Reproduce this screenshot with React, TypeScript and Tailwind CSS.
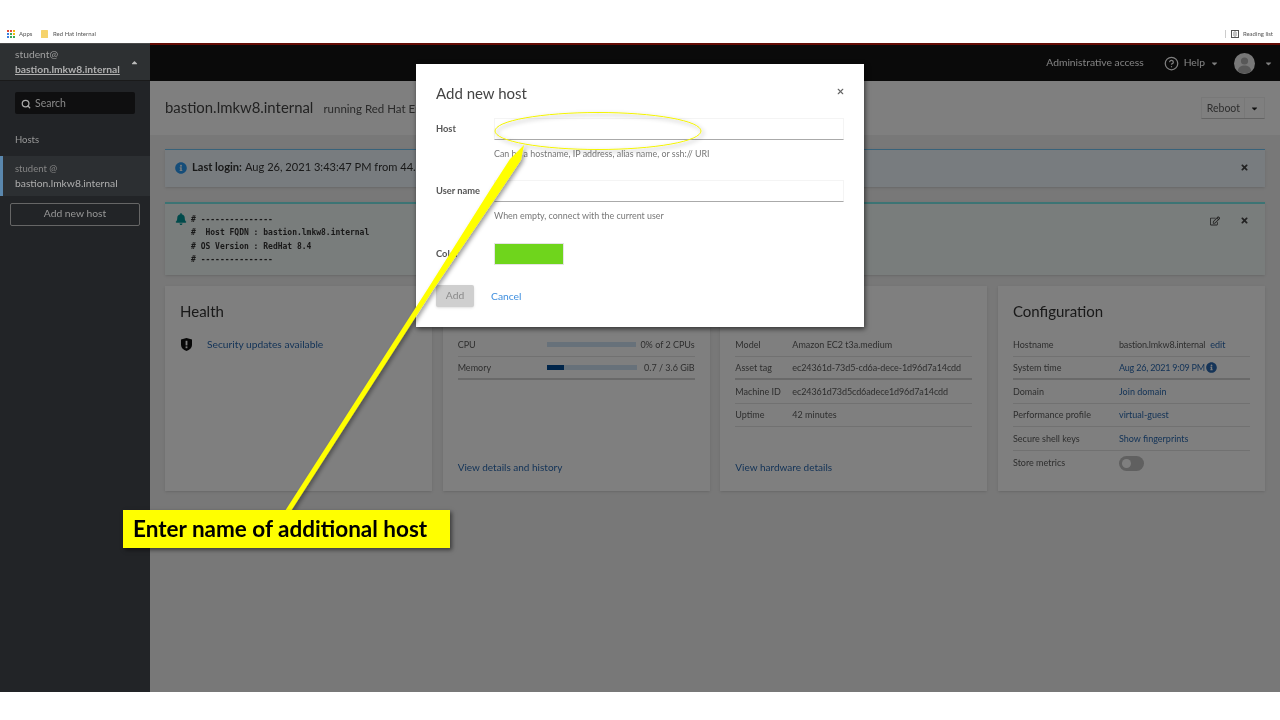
import React from 'react';
import { Search, X, CircleHelp } from 'lucide-react';
import { FaBell, FaInfoCircle, FaRegEdit, FaCaretDown, FaCaretUp, FaTimes } from 'react-icons/fa';

const Row: React.FC<{ label: string; labelW?: string; thick?: boolean; last?: boolean; children: React.ReactNode }> = ({ label, labelW = 'w-[57px]', thick, last, children }) => (
  <div className={`flex items-center h-[23.6px] ${last ? '' : thick ? 'border-b-2 border-[#d2d2d2]' : 'border-b border-[#e2e2e2]'}`}>
    <div className={`${labelW} shrink-0 text-[#5c5c5c]`}>{label}</div>
    <div className="flex-1 min-w-0 flex items-center whitespace-nowrap text-[#5c5c5c]">{children}</div>
  </div>
);

const Card: React.FC<{ title: string; footer?: string; children: React.ReactNode }> = ({ title, footer, children }) => (
  <div className="bg-white flex flex-col h-[205px] px-[15px] pt-[14px] pb-[16px] text-[9px] shadow-sm">
    <div className="text-[15px] leading-[22px] text-[#333] mb-[11px]">{title}</div>
    <div className="flex-1">{children}</div>
    {footer && <div className="text-[#2a69b0] text-[10px]">{footer}</div>}
  </div>
);

const Link: React.FC<{ children: React.ReactNode }> = ({ children }) => <span className="text-[#2a69b0]">{children}</span>;

export default function App() {
  return (
    <div className="relative w-[1280px] h-[720px] bg-white overflow-hidden blur-[0.35px] font-['Lato','Liberation_Sans',sans-serif]">
      {/* bookmarks bar */}
      <div className="h-[43px] flex items-end justify-between pb-[5px] pl-[7px] pr-[7px] text-[6px] leading-[9px] text-[#555]">
        <div className="flex items-center">
          <svg width="8" height="8" viewBox="0 0 8 8" className="mr-[4px]">
            <rect x="0" y="0" width="2" height="2" fill="#e04a3a" /><rect x="3" y="0" width="2" height="2" fill="#e04a3a" /><rect x="6" y="0" width="2" height="2" fill="#f2b90f" />
            <rect x="0" y="3" width="2" height="2" fill="#3a80e0" /><rect x="3" y="3" width="2" height="2" fill="#3aa655" /><rect x="6" y="3" width="2" height="2" fill="#f2b90f" />
            <rect x="0" y="6" width="2" height="2" fill="#3a80e0" /><rect x="3" y="6" width="2" height="2" fill="#3aa655" /><rect x="6" y="6" width="2" height="2" fill="#3aa655" />
          </svg>
          <span className="mr-[8px] w-[14px]">Apps</span>
          <svg width="7" height="8" viewBox="0 0 7 8" className="mr-[5px]"><rect width="7" height="8" rx="0.5" fill="#f6d36b" /></svg>
          <span>Red Hat Internal</span>
        </div>
        <div className="flex items-center">
          <div className="w-px h-[8px] bg-[#ccc] mr-[5px]" />
          <svg width="8" height="8" viewBox="0 0 8 8" className="mr-[4px]"><rect x="0.5" y="0.5" width="7" height="7" fill="none" stroke="#555" /><path d="M4 1v6M2 3h1M2 5h1M5 3h1M5 5h1" stroke="#555" strokeWidth="0.7" /></svg>
          <span>Reading list</span>
        </div>
      </div>

      <div className="flex h-[649px]">
        {/* sidebar */}
        <aside className="w-[150px] shrink-0 bg-[#222427] flex flex-col text-[#bdbdbd] border-t border-[#4a4a4a]">
          <div className="h-[37px] bg-[#2d3032] flex items-center justify-between pl-[15px] pr-[11px] border-b border-[#1a1a1a]">
            <div className="text-[10.3px] leading-[15px]">
              <div className="text-[#a0a0a0]">student@</div>
              <div className="underline font-bold text-[#b0b0b0]">bastion.lmkw8.internal</div>
            </div>
            <FaCaretUp size={9} className="text-[#bbb]" />
          </div>
          <div className="px-[15px] pt-[11px]">
            <div className="h-[22px] bg-[#0f0f10] rounded-[2px] flex items-center pl-[6px] pt-px text-[10.5px] text-[#8a8a8a]">
              <Search size={10} strokeWidth={3} className="text-[#aaa] mr-[4px]" />
              Search
            </div>
          </div>
          <div className="px-[15px] mt-[19px] h-[23px] text-[9.5px] text-[#999]">Hosts</div>
          <div className="h-[40px] bg-[#2c2f32] border-l-[3px] border-[#5a87ad] pl-[12px] flex flex-col justify-center text-[10.3px] leading-[15px]">
            <div className="text-[#858585] text-[9.5px]">student @</div>
            <div className="text-[#aeaeae]">bastion.lmkw8.internal</div>
          </div>
          <div className="mx-[10px] mt-[7px] h-[23px] border border-[#666] rounded-[2px] flex items-center justify-center text-[10.3px] text-[#979797] pb-px">Add new host</div>
        </aside>

        {/* main frame */}
        <div className="relative flex-1 flex flex-col bg-[#f0f0f0] min-w-0">
          <header className="h-[38px] shrink-0 bg-[#151515] border-t-2 border-[#c9190b] flex items-center justify-end pr-[7px] text-[10.3px] text-white">
            <span className="mr-[20px]">Administrative access</span>
            <CircleHelp size={15} className="mr-[5px]" />
            <span className="mr-[5px]">Help</span>
            <FaCaretDown size={9} className="mr-[15px]" />
            <svg width="21" height="21" viewBox="0 0 21 21" className="mr-[9px]">
              <circle cx="10.5" cy="10.5" r="10.5" fill="#f0f0f0" />
              <circle cx="10.5" cy="8" r="3.6" fill="#b0b0b0" />
              <path d="M3.6 18c.8-4.2 3.4-5.6 6.9-5.6s6.1 1.4 6.9 5.6a10.5 10.5 0 0 1-13.8 0z" fill="#b0b0b0" />
            </svg>
            <FaCaretDown size={9} />
          </header>

          <div className="h-[54px] shrink-0 bg-[#fff] flex items-center justify-between pl-[15px] pr-[15px]">
            <div className="flex items-baseline pb-[2px]">
              <span className="text-[14.9px] text-[#444]">bastion.lmkw8.internal</span>
              <span className="ml-[10px] text-[11.5px] text-[#555]">running Red Hat Enterprise Linux 8.4 (Ootpa)</span>
            </div>
            <div className="h-[22px] flex items-center border border-[#f0f0f0] border-b-[#c8c8c8] text-[10.5px] text-[#5c5c5c]">
              <span className="pl-[5px] pr-[4px] pt-px">Reboot</span>
              <span className="h-full w-[20px] flex items-center justify-center border-l border-[#f0f0f0]"><FaCaretDown size={9} className="text-[#222]" /></span>
            </div>
          </div>

          <div className="flex-1 px-[15px] pt-[14px]">
            <div className="h-[38px] bg-[#f1f9ff] border-t border-[#70c4f4] flex items-center pl-[10px] pr-[16px] pb-[2px] shadow-sm text-[11.1px] text-[#333]">
              <FaInfoCircle size={12} className="text-[#2b9af3] mr-[5px]" />
              <span className="font-bold mr-[3px]">Last login:</span>
              <span>Aug 26, 2021 3:43:47 PM from 44.231.182.10 on web console</span>
              <FaTimes size={9} className="ml-auto text-[#444]" />
            </div>
            <div className="mt-[15px] h-[73px] bg-[#f3faf8] border-t-2 border-[#78e8e8] flex pt-[8px] pl-[10px] pr-[16px] shadow-sm">
              <FaBell size={12} className="text-[#009596] mt-px mr-[4px]" />
              <pre className="font-['DejaVu_Sans_Mono',monospace] text-[8px] leading-[13.3px] font-bold text-[#333] pt-px">{`# ---------------
#  Host FQDN : bastion.lmkw8.internal
# OS Version : RedHat 8.4
# ---------------`}</pre>
              <div className="ml-auto flex items-start pt-[4px] text-[#444]">
                <FaRegEdit size={10} className="mr-[20px]" />
                <FaTimes size={9} />
              </div>
            </div>

            <div className="mt-[11px] grid grid-cols-4 gap-[10.66px]">
              <Card title="Health">
                <div className="flex items-center h-[23px] text-[10.25px]">
                  <svg width="11" height="13" viewBox="0 0 11 13" className="ml-px mr-[15px]">
                    <path d="M0 1.5 5.5 0 11 1.5V7c0 3-2.5 5-5.5 6C2.5 12 0 10 0 7z" fill="#111" />
                    <rect x="4.6" y="2.8" width="1.8" height="4.6" fill="#fff" />
                    <rect x="4.6" y="8.4" width="1.8" height="1.8" fill="#fff" />
                  </svg>
                  <Link>Security updates available</Link>
                </div>
              </Card>
              <Card title="Usage" footer="View details and history">
                <Row label="CPU" labelW="w-[89px]">
                  <div className="w-[89px] h-[5px] bg-[#cfe2f5]" />
                  <span className="ml-auto">0% of 2 CPUs</span>
                </Row>
                <Row label="Memory" labelW="w-[89px]" thick>
                  <div className="w-[90px] h-[5px] bg-[#cfe2f5]"><div className="h-full bg-[#004b95]" style={{ width: 17 }} /></div>
                  <span className="ml-auto">0.7 / 3.6 GiB</span>
                </Row>
              </Card>
              <Card title="System information" footer="View hardware details">
                <Row label="Model">Amazon EC2 t3a.medium</Row>
                <Row label="Asset tag" thick><span className="tracking-[-0.1px]">ec24361d-73d5-cd6a-dece-1d96d7a14cdd</span></Row>
                <Row label="Machine ID"><span className="tracking-[-0.1px]">ec24361d73d5cd6adece1d96d7a14cdd</span></Row>
                <Row label="Uptime">42 minutes</Row>
              </Card>
              <Card title="Configuration">
                <Row label="Hostname" labelW="w-[106px]"><span className="tracking-[-0.15px]">bastion.lmkw8.internal</span><span className="ml-[5px]"><Link>edit</Link></span></Row>
                <Row label="System time" labelW="w-[106px]" thick><span className="tracking-[-0.2px]"><Link>Aug 26, 2021 9:09 PM</Link></span><FaInfoCircle size={11} className="ml-px text-[#2a69b0]" /></Row>
                <Row label="Domain" labelW="w-[106px]"><Link>Join domain</Link></Row>
                <Row label="Performance profile" labelW="w-[106px]"><Link>virtual-guest</Link></Row>
                <Row label="Secure shell keys" labelW="w-[106px]"><Link>Show fingerprints</Link></Row>
                <Row label="Store metrics" labelW="w-[106px]" last>
                  <div className="w-[25px] h-[15px] rounded-full bg-[#c0c0c0] flex items-center pl-[3px] mt-[2px]"><div className="w-[9px] h-[9px] rounded-full bg-white" /></div>
                </Row>
              </Card>
            </div>
          </div>

          {/* modal backdrop */}
          <div className="absolute inset-0 bg-black/50" />
        </div>
      </div>

      {/* modal */}
      <div className="absolute left-[416px] top-[64px] w-[448px] h-[263px] bg-white shadow-[1px_2px_5px_rgba(0,0,0,0.6)] px-[20px] pt-[19px] text-[9.3px] text-[#555]">
        <div className="flex items-center justify-between h-[20px]">
          <span className="text-[15px] text-[#444]">Add new host</span>
          <X size={9} strokeWidth={3} className="mr-[-1px] mb-[3px] text-[#666]" />
        </div>
        <div className="mt-[15px] flex">
          <div className="w-[58px] font-bold pt-[4px]">Host</div>
          <div className="flex-1">
            <div className="h-[22px] border border-[#f4f4f4] border-b-[#aaa]" />
            <div className="mt-[8px] text-[8.9px] leading-[12px] text-[#777]">Can be a hostname, IP address, alias name, or ssh:// URI</div>
          </div>
        </div>
        <div className="mt-[20px] flex">
          <div className="w-[58px] font-bold pt-[4px]">User name</div>
          <div className="flex-1">
            <div className="h-[22px] border border-[#f4f4f4] border-b-[#aaa]" />
            <div className="mt-[8px] text-[8.9px] leading-[12px] text-[#777]">When empty, connect with the current user</div>
          </div>
        </div>
        <div className="mt-[21px] flex items-center">
          <div className="w-[58px] font-bold">Color</div>
          <div className="w-[70px] h-[22px] bg-[#6fd51c] border border-[#e4e4e4]" />
        </div>
        <div className="mt-[20px] flex items-center text-[10.3px]">
          <div className="w-[38px] h-[22px] bg-[#cfcfcf] rounded-[2px] flex items-center justify-center text-[#8a8a8a] shadow-sm">Add</div>
          <span className="ml-[17px] pt-px text-[#3f8fdf]">Cancel</span>
        </div>
      </div>

      {/* callout annotation */}
      <svg className="absolute inset-0 pointer-events-none" width="1280" height="720" viewBox="0 0 1280 720">
        <defs>
          <filter id="sh" x="-20%" y="-20%" width="140%" height="140%">
            <feDropShadow dx="2" dy="2" stdDeviation="2" floodColor="#000" floodOpacity="0.4" />
          </filter>
        </defs>
        <ellipse cx="598" cy="131" rx="103" ry="18.5" fill="none" stroke="#f4f400" strokeWidth="1" filter="url(#sh)" />
        <polygon points="285,511 291,511 433,290 501,190 521,160 524,145 510,159 490,190 427,290" fill="#ffff00" filter="url(#sh)" />
      </svg>
      <div className="absolute left-[123px] top-[510px] w-[327px] h-[38px] bg-[#ffff00] shadow-[2px_2px_4px_rgba(0,0,0,0.5)] pl-[10px] flex items-center text-[22.5px] font-bold text-black">
        Enter name of additional host
      </div>
    </div>
  );
}
